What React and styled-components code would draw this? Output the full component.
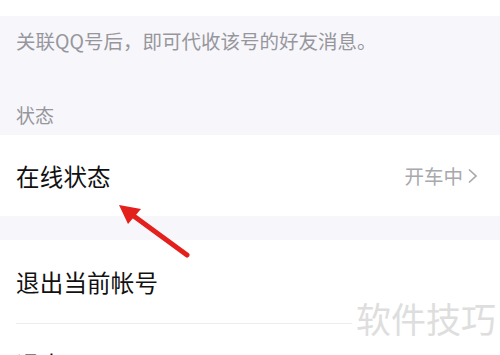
import React from 'react';
import styled, { createGlobalStyle } from 'styled-components';

const GlobalStyle = createGlobalStyle`
  html, body {
    margin: 0;
    padding: 0;
    background: #ffffff;
  }
  body {
    font-family: "Noto Sans CJK SC", "Noto Sans", sans-serif;
    overflow: hidden;
  }
`;

const Page = styled.div`
  position: relative;
  width: 500px;
  height: 355px;
  overflow: hidden;
  background: #f7f7fb;
`;

const TopCard = styled.div`
  height: 16px;
  background: #ffffff;
`;

const Hint = styled.div`
  padding: 13px 16px 0;
  height: 24px;
  line-height: 24px;
  font-size: 19.5px;
  color: #96969c;
  white-space: nowrap;
`;

const SectionTitle = styled.div`
  padding: 50px 16px 0;
  height: 24px;
  line-height: 24px;
  font-size: 19px;
  color: #96969c;
  margin-bottom: 8px;
`;

const Group = styled.div`
  background: #ffffff;
  margin-bottom: ${(p) => p.gap || 0}px;
`;

const Row = styled.div`
  display: flex;
  align-items: center;
  justify-content: space-between;
  height: ${(p) => p.h}px;
  padding: 0 22px 0 ${(p) => (p.inset ? 0 : 16)}px;
  box-sizing: border-box;
`;

const Label = styled.span`
  font-size: 23.5px;
  color: #111111;
  letter-spacing: 0.2px;
`;

const Value = styled.span`
  display: flex;
  align-items: center;
  gap: 3px;
  font-size: 19.5px;
  color: #a8a8ad;
`;

const DividerRow = styled.div`
  margin-left: 16px;
  border-bottom: 1px solid #ececf0;
`;

const Watermark = styled.div`
  position: absolute;
  left: 352px;
  top: 296px;
  padding: 0 4px;
  background: #ffffff;
  font-size: 35px;
  line-height: 44px;
  color: #dedede;
`;

const Arrow = styled.svg`
  position: absolute;
  left: 0;
  top: 0;
  pointer-events: none;
`;

function Chevron() {
  return (
    <svg width="12" height="16" viewBox="0 0 12 16">
      <polyline points="3,1.5 10,8 3,14.5" fill="none" stroke="#a8a8ad" strokeWidth="1.7" />
    </svg>
  );
}

export default function App() {
  return (
    <>
      <GlobalStyle />
      <Page>
        <TopCard />
        <Hint>关联QQ号后，即可代收该号的好友消息。</Hint>
        <SectionTitle>状态</SectionTitle>
        <Group gap={24}>
          <Row h={81}>
            <Label>在线状态</Label>
            <Value>
              开车中
              <Chevron />
            </Value>
          </Row>
        </Group>
        <Group>
          <DividerRow>
            <Row h={83} inset>
              <Label>退出当前帐号</Label>
            </Row>
          </DividerRow>
          <Row h={80}>
            <Label>退出QQ</Label>
          </Row>
        </Group>
        <Watermark>软件技巧</Watermark>
        <Arrow width="500" height="355" viewBox="0 0 500 355">
          <line x1="187" y1="255" x2="131" y2="214" stroke="#e3201b" strokeWidth="5" strokeLinecap="round" />
          <polygon points="119,205 141,209 128,224" fill="#e3201b" />
        </Arrow>
      </Page>
    </>
  );
}
